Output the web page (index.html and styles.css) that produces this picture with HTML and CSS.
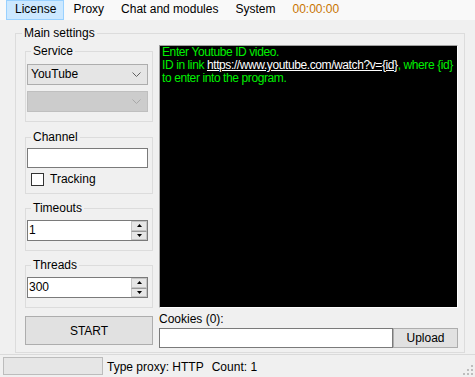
FILE: index.html
```html
<!DOCTYPE html>
<html lang="en">
<head>
    <meta charset="UTF-8">
    <meta name="viewport" content="width=device-width, initial-scale=1.0">
    <title>YouTube</title>
    <link rel="stylesheet" href="styles.css">
</head>
<body>
    <div class="window">
        <ul class="menu">
            <li class="menu-item active">License</li>
            <li class="menu-item">Proxy</li>
            <li class="menu-item">Chat and modules</li>
            <li class="menu-item">System</li>
            <li class="menu-item timer">00:00:00</li>
        </ul>

        <fieldset class="group main-group">
            <legend class="main-legend">Main settings</legend>
            <div class="main-body">
                <div class="side">
                    <fieldset class="group service-group">
                        <legend>Service</legend>
                        <div class="combo">
                            <span class="combo-text">YouTube</span>
                            <svg class="combo-arrow" width="9" height="5" viewBox="0 0 9 5"><polyline points="0.5,0.5 4.5,4.5 8.5,0.5" fill="none" stroke="#606060" stroke-width="1"/></svg>
                        </div>
                        <div class="combo disabled">
                            <span class="combo-text"></span>
                            <svg class="combo-arrow" width="9" height="5" viewBox="0 0 9 5"><polyline points="0.5,0.5 4.5,4.5 8.5,0.5" fill="none" stroke="#a8a8a8" stroke-width="1"/></svg>
                        </div>
                    </fieldset>

                    <fieldset class="group channel-group">
                        <legend>Channel</legend>
                        <div class="textbox"></div>
                        <div class="check-row">
                            <span class="checkbox"></span>
                            <span class="check-label">Tracking</span>
                        </div>
                    </fieldset>

                    <fieldset class="group number-group">
                        <legend>Timeouts</legend>
                        <div class="spin">
                            <span class="spin-value">1</span>
                            <div class="spin-btns">
                                <span class="spin-btn"><svg width="5" height="3" viewBox="0 0 5 3"><polygon points="2.5,0 5,3 0,3" fill="#000"/></svg></span>
                                <span class="spin-btn"><svg width="5" height="3" viewBox="0 0 5 3"><polygon points="0,0 5,0 2.5,3" fill="#000"/></svg></span>
                            </div>
                        </div>
                    </fieldset>

                    <fieldset class="group number-group">
                        <legend>Threads</legend>
                        <div class="spin">
                            <span class="spin-value">300</span>
                            <div class="spin-btns">
                                <span class="spin-btn"><svg width="5" height="3" viewBox="0 0 5 3"><polygon points="2.5,0 5,3 0,3" fill="#000"/></svg></span>
                                <span class="spin-btn"><svg width="5" height="3" viewBox="0 0 5 3"><polygon points="0,0 5,0 2.5,3" fill="#000"/></svg></span>
                            </div>
                        </div>
                    </fieldset>

                    <button class="btn start-btn" type="button">START</button>
                </div>

                <div class="content">
                    <div class="console">
                        <div class="console-line">Enter Youtube ID video.</div>
                        <div class="console-line">ID in link <span class="console-link">https://www.youtube.com/watch?v={id}</span>, where {id}</div>
                        <div class="console-line">to enter into the program.</div>
                    </div>
                    <div class="cookies-label">Cookies (0):</div>
                    <div class="cookies-row">
                        <div class="textbox cookies-input"></div>
                        <button class="btn upload-btn" type="button">Upload</button>
                    </div>
                </div>
            </div>
        </fieldset>

        <div class="status">
            <div class="progress"></div>
            <span class="status-text">Type proxy: HTTP</span>
            <span class="status-text">Count: 1</span>
            <svg class="grip" width="10" height="10" viewBox="0 0 10 10">
                <rect x="8" y="0" width="2" height="2" fill="#bdbdbd"/>
                <rect x="4" y="4" width="2" height="2" fill="#bdbdbd"/>
                <rect x="8" y="4" width="2" height="2" fill="#bdbdbd"/>
                <rect x="0" y="8" width="2" height="2" fill="#bdbdbd"/>
                <rect x="4" y="8" width="2" height="2" fill="#bdbdbd"/>
                <rect x="8" y="8" width="2" height="2" fill="#bdbdbd"/>
            </svg>
        </div>
    </div>
</body>
</html>
```

FILE: styles.css
```css
* {
    box-sizing: border-box;
}
body {
    margin: 0;
    font-family: "Liberation Sans", Arial, sans-serif;
    font-size: 12px;
    color: #000;
}
.window {
    width: 475px;
    height: 377px;
    background: #f0f0f0;
    display: flex;
    flex-direction: column;
    overflow: hidden;
}
.menu {
    display: flex;
    height: 20px;
    margin: 0;
    padding: 0 0 0 6px;
    list-style: none;
    background: #f9f9f9;
}
.menu-item {
    height: 20px;
    line-height: 19px;
    padding: 0 7px 0 8px;
    border: 1px solid transparent;
    border-top: 0;
}
.menu-item.active {
    background: #cce8ff;
    border-color: #99d1ff;
    border-top: 1px solid #99d1ff;
    line-height: 17px;
}
.timer {
    color: #c87400;
}
.group {
    margin: 0;
    min-width: 0;
    border: 1px solid #dcdcdc;
}
.group legend {
    padding: 0 2px;
    margin-left: 4px;
    line-height: 14px;
}
.main-group {
    width: 450px;
    height: 327px;
    margin: 6px 0 1px 15px;
    padding: 0 6px 0 9px;
}
.group .main-legend {
    margin-left: -3px;
}
.main-body {
    display: flex;
    gap: 6px;
}
.side {
    width: 128px;
    flex-shrink: 0;
    display: flex;
    flex-direction: column;
}
.service-group {
    margin-top: 4px;
    padding: 6px 4px 9px 1px;
}
.channel-group {
    margin-top: 8px;
    padding: 4px 4px 7px 1px;
}
.number-group {
    margin-top: 7px;
    padding: 5px 4px 9px 1px;
}
.combo {
    display: flex;
    align-items: center;
    height: 21px;
    padding: 0 3px 0 3px;
    border: 1px solid #adadad;
    background: #e5e5e5;
}
.combo + .combo {
    margin-top: 6px;
}
.combo.disabled {
    background: #cccccc;
    border-color: #bfbfbf;
}
.combo-text {
    flex: 1;
    line-height: 19px;
}
.combo-arrow {
    margin-right: 3px;
}
.textbox {
    height: 20px;
    border: 1px solid #7a7a7a;
    background: #fff;
}
.check-row {
    display: flex;
    align-items: center;
    height: 13px;
    margin-top: 5px;
}
.checkbox {
    width: 13px;
    height: 13px;
    margin-left: 4px;
    border: 1px solid #333;
    background: #fff;
}
.check-label {
    margin-left: 6px;
    line-height: 13px;
}
.spin {
    display: flex;
    height: 21px;
    border: 1px solid #7a7a7a;
    background: #fff;
}
.spin-value {
    flex: 1;
    padding-left: 1px;
    line-height: 19px;
}
.spin-btns {
    width: 16px;
    display: flex;
    flex-direction: column;
}
.spin-btn {
    flex: 1;
    display: flex;
    align-items: center;
    justify-content: center;
    background: #e6e6e6;
    border: 1px solid #c4c4c4;
}
.spin-btn + .spin-btn {
    border-top-color: #9a9a9a;
}
.btn {
    font-family: inherit;
    font-size: 12px;
    color: #000;
    background: #e1e1e1;
    border: 1px solid #adadad;
    padding: 0;
}
.start-btn {
    height: 29px;
    margin-top: 8px;
}
.content {
    flex: 1;
    min-width: 0;
    display: flex;
    flex-direction: column;
}
.console {
    height: 263px;
    margin-top: 5px;
    padding: 0 2px;
    overflow: hidden;
    background: #000;
    border: 1px solid;
    border-color: #a0a0a0 #fff #fff #a0a0a0;
    color: #00f000;
    line-height: 13px;
    letter-spacing: -0.4px;
}
.console-line {
    white-space: nowrap;
}
.console-link {
    color: #fff;
    text-decoration: underline;
}
.cookies-label {
    margin-top: 4px;
    line-height: 14px;
}
.cookies-row {
    display: flex;
    margin-top: 2px;
}
.cookies-input {
    width: 234px;
}
.upload-btn {
    width: 65px;
    height: 20px;
}
.status {
    flex: 1;
    display: flex;
    align-items: flex-start;
    gap: 8px;
    padding: 2px 2px 0 3px;
    border-top: 1px solid #dadada;
}
.progress {
    width: 100px;
    height: 18px;
    margin-right: -4px;
    background: #e6e6e6;
    border: 1px solid #bcbcbc;
}
.status-text {
    margin-top: 3px;
    line-height: 14px;
}
.grip {
    margin-left: auto;
    margin-top: 8px;
}
```
